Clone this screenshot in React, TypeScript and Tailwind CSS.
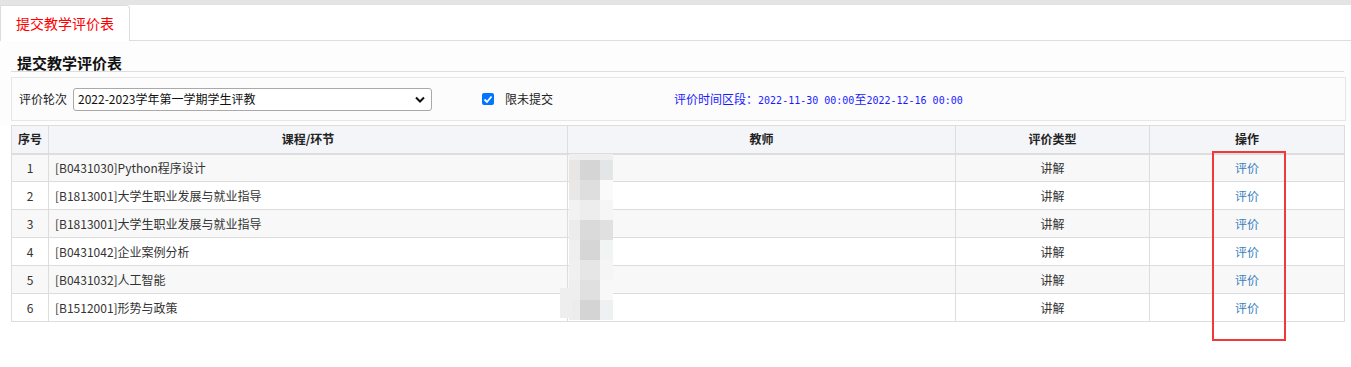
import React from 'react';

const rows = [
  { no: 1, course: '[B0431030]Python程序设计' },
  { no: 2, course: '[B1813001]大学生职业发展与就业指导' },
  { no: 3, course: '[B1813001]大学生职业发展与就业指导' },
  { no: 4, course: '[B0431042]企业案例分析' },
  { no: 5, course: '[B0431032]人工智能' },
  { no: 6, course: '[B1512001]形势与政策' },
];

// blurred teacher names: [left, top, width, height, colour]
const mosaic: [number, number, number, number, string][] = [
  [569, 154, 44, 6, '#efefef'],
  [569, 160, 11, 20, '#e8e6e4'], [580, 160, 20, 20, '#d4d5d4'], [600, 160, 13, 20, '#e4e5e7'],
  [569, 180, 11, 20, '#e9e8e7'], [580, 180, 20, 20, '#dedede'], [600, 180, 13, 20, '#fafafa'],
  [569, 200, 11, 20, '#f2f2f2'], [580, 200, 20, 20, '#ededed'], [600, 200, 13, 20, '#f6f6f6'],
  [569, 220, 11, 20, '#ececec'], [580, 220, 20, 20, '#dadada'], [600, 220, 13, 20, '#e0e0e0'],
  [569, 240, 11, 20, '#efefef'], [580, 240, 20, 20, '#d6d6d6'], [600, 240, 13, 20, '#f2f3f3'],
  [569, 260, 11, 20, '#f0f0f0'], [580, 260, 20, 20, '#e6e6e6'], [600, 260, 13, 20, '#f5f5f5'],
  [569, 280, 11, 20, '#eeeeee'], [580, 280, 20, 20, '#e0e0e0'], [600, 280, 13, 20, '#f8f8f8'],
  [569, 300, 11, 20, '#ececec'], [580, 300, 20, 20, '#d4d4d4'], [600, 300, 13, 20, '#eff0f2'],
  [560, 288, 12, 30, '#eeeeee'],
];

const mono = { fontFamily: '"DejaVu Sans Mono", monospace' };

export default function App() {
  return (
    <div
      className="relative w-[1351px] h-[367px] overflow-hidden bg-white text-[#333]"
      style={{ fontFamily: '"Noto Sans CJK SC", "Noto Sans", sans-serif' }}
    >
      <div className="h-[5px] bg-[#e4e4e4]" />

      <div className="flex h-[36px] border-b border-[#dddddd]">
        <div className="-mb-px w-[130px] flex items-center justify-center bg-white border border-b-0 border-[#dddddd] rounded-tr-[4px] text-[14px] text-[#ff0000]">
          提交教学评价表
        </div>
      </div>

      <div className="pl-[11px] pr-[5px] bg-[#fdfdfd]">
        <div className="h-[31px] pr-[2px]">
          <div className="h-full flex items-center pl-[6px] pt-[14px] border-b border-[#dddddd] text-[15px] font-bold text-[#111]">
            提交教学评价表
          </div>
        </div>

        <div className="mt-[5px] h-[44px] flex items-center border border-[#e6e6e6] bg-[#fcfcfc] text-[12px]">
          <span className="ml-[7px] text-[#222]">评价轮次</span>
          <div className="ml-[6px] w-[359px] h-[23px] flex items-center justify-between pl-[4px] pr-[6px] bg-white border border-[#a9a9a9] rounded-[3px] text-[#111]">
            <span>2022-2023学年第一学期学生评教</span>
            <svg width="10" height="7" viewBox="0 0 10 7" fill="none" stroke="#111" strokeWidth="2">
              <path d="M1 1.5l4 4 4-4" />
            </svg>
          </div>
          <div className="ml-[50px] w-[12px] h-[12px] rounded-[2px] bg-[#0075ff] flex items-center justify-center">
            <svg width="10" height="9" viewBox="0 0 10 9" fill="none" stroke="#fff" strokeWidth="1.8">
              <path d="M1.5 4.5l2.5 2.5 4.5-5.5" />
            </svg>
          </div>
          <span className="ml-[11px] text-[#222]">限未提交</span>
          <span className="ml-[121px] text-[#1a1aff]">
            评价时间区段：
            <span className="text-[10px]" style={mono}>2022-11-30 00:00</span>
            至
            <span className="text-[10px]" style={mono}>2022-12-16 00:00</span>
          </span>
        </div>

        <div className="h-[4px]" />
      </div>

      <div className="pl-[11px]">
        <table className="w-[1333px] table-fixed border-collapse text-[12px]">
          <colgroup>
            <col className="w-[37px]" />
            <col className="w-[519px]" />
            <col className="w-[388px]" />
            <col className="w-[194px]" />
            <col className="w-[195px]" />
          </colgroup>
          <thead>
            <tr className="h-[28px] bg-[#f4f5f9] font-bold text-[#222]">
              <th className="border border-b-2 border-[#dddddd] font-bold">序号</th>
              <th className="border border-b-2 border-[#dddddd] font-bold">课程/环节</th>
              <th className="border border-b-2 border-[#dddddd] font-bold">教师</th>
              <th className="border border-b-2 border-[#dddddd] font-bold">评价类型</th>
              <th className="border border-b-2 border-[#dddddd] font-bold">操作</th>
            </tr>
          </thead>
          <tbody>
            {rows.map((r) => (
              <tr key={r.no} className={r.no % 2 === 1 ? 'h-[28px] bg-[#f8f8f8]' : 'h-[28px] bg-white'}>
                <td className="border border-[#dddddd] text-center">{r.no}</td>
                <td className="border border-[#dddddd] pl-[6px]">{r.course}</td>
                <td className="border border-[#dddddd]"></td>
                <td className="border border-[#dddddd] text-center">讲解</td>
                <td className="border border-[#dddddd] text-center text-[#3a7fc1]">评价</td>
              </tr>
            ))}
          </tbody>
        </table>
      </div>

      {mosaic.map(([l, t, w, h, c], i) => (
        <div
          key={i}
          className="absolute"
          style={{ left: l, top: t, width: w, height: h, backgroundColor: c }}
        />
      ))}

      <div className="absolute left-[1212px] top-[151px] w-[74px] h-[190px] border-2 border-[#f03a3a]" />
    </div>
  );
}
